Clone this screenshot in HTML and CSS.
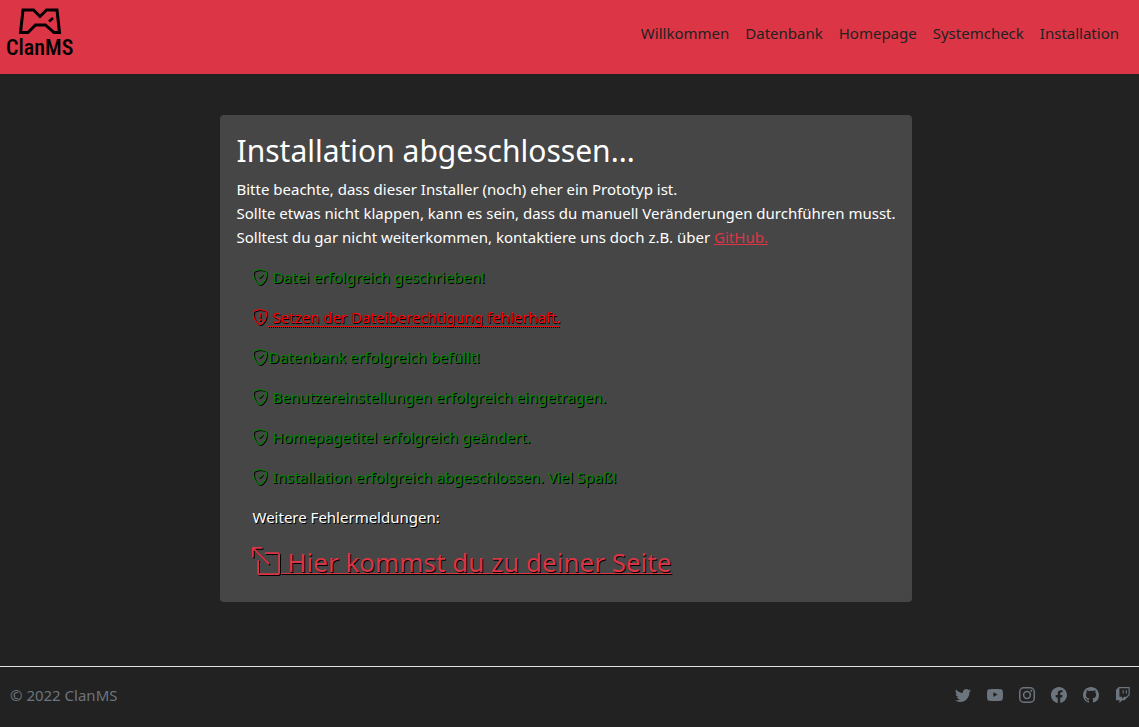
FILE: index.html
```html
<!DOCTYPE html>
<html lang="de">
<head>
<meta charset="utf-8">
<meta name="viewport" content="width=device-width, initial-scale=1">
<title>ClanMS – Installation</title>
<link rel="stylesheet" href="styles.css">
</head>
<body>
<svg class="sprite" aria-hidden="true">
  <symbol id="shield" viewBox="0 0 16 16"><path d="M5.338 1.59a61.44 61.44 0 0 0-2.837.856.481.481 0 0 0-.328.39c-.554 4.157.726 7.19 2.253 9.188a10.725 10.725 0 0 0 2.287 2.233c.346.244.652.42.893.533.12.057.218.095.293.118a.55.55 0 0 0 .101.025.615.615 0 0 0 .1-.025c.076-.023.174-.061.294-.118.24-.113.547-.29.893-.533a10.726 10.726 0 0 0 2.287-2.233c1.527-1.997 2.807-5.031 2.253-9.188a.48.48 0 0 0-.328-.39c-.651-.213-1.75-.56-2.837-.855C9.552 1.29 8.531 1.067 8 1.067c-.53 0-1.552.223-2.662.524zM5.072.56C6.157.265 7.31 0 8 0s1.843.265 2.928.56c1.11.3 2.229.655 2.887.87a1.54 1.54 0 0 1 1.044 1.262c.596 4.477-.787 7.795-2.465 9.99a11.775 11.775 0 0 1-2.517 2.453 7.159 7.159 0 0 1-1.048.625c-.28.132-.581.24-.829.24s-.548-.108-.829-.24a7.158 7.158 0 0 1-1.048-.625 11.777 11.777 0 0 1-2.517-2.453C1.928 10.487.545 7.169 1.141 2.692A1.54 1.54 0 0 1 2.185 1.43 62.456 62.456 0 0 1 5.072.56z"/></symbol>
  <symbol id="check" viewBox="0 0 16 16"><use href="#shield"/><path d="M10.854 5.146a.5.5 0 0 1 0 .708l-3 3a.5.5 0 0 1-.708 0l-1.5-1.5a.5.5 0 1 1 .708-.708L7.5 7.793l2.646-2.647a.5.5 0 0 1 .708 0z"/></symbol>
  <symbol id="alert" viewBox="0 0 16 16"><use href="#shield"/><path d="M7.001 11a1 1 0 1 1 2 0 1 1 0 0 1-2 0zM7.1 4.995a.905.905 0 1 1 1.8 0l-.35 3.507a.553.553 0 0 1-1.1 0z"/></symbol>
</svg>

<header class="header">
  <a class="brand" href="#" aria-label="ClanMS">
    <svg class="brand-mark" viewBox="0 0 44 28" aria-hidden="true"><path d="M5 3h10.500l6.500 6.500L28.500 3H39l2.500 22.500H36L27.500 18h-10L10 25.500H2.500z" fill="none" stroke="#000" stroke-width="3"/><path d="M31 14.500l4-3.500" stroke="#000" stroke-width="2.600"/></svg>
    <span class="brand-name">ClanMS</span>
  </a>
  <nav class="nav">
    <a href="#">Willkommen</a>
    <a href="#">Datenbank</a>
    <a href="#">Homepage</a>
    <a href="#">Systemcheck</a>
    <a href="#">Installation</a>
  </nav>
</header>

<main class="main">
  <section class="card">
    <h2 class="title">Installation abgeschlossen...</h2>
    <p class="intro">Bitte beachte, dass dieser Installer (noch) eher ein Prototyp ist.<br>Sollte etwas nicht klappen, kann es sein, dass du manuell Veränderungen durchführen musst.<br>Solltest du gar nicht weiterkommen, kontaktiere uns doch z.B. über <a class="link" href="#">GitHub.</a></p>
    <div class="log">
      <p class="ok"><svg class="icon"><use href="#check"/></svg> Datei erfolgreich geschrieben!</p>
      <p class="error"><svg class="icon"><use href="#alert"/></svg><span class="hint"> Setzen der Dateiberechtigung fehlerhaft.</span></p>
      <p class="ok"><svg class="icon"><use href="#check"/></svg>Datenbank erfolgreich befüllt!</p>
      <p class="ok"><svg class="icon"><use href="#check"/></svg> Benutzereinstellungen erfolgreich eingetragen.</p>
      <p class="ok"><svg class="icon"><use href="#check"/></svg> Homepagetitel erfolgreich geändert.</p>
      <p class="ok"><svg class="icon"><use href="#check"/></svg> Installation erfolgreich abgeschlossen. Viel Spaß!</p>
      <p>Weitere Fehlermeldungen:</p>
      <h3 class="next"><a class="link" href="#"><svg class="icon icon-large" viewBox="0 0 16 16"><path d="M7.364 3.5a.5.5 0 0 1 .5-.5H14.5A1.5 1.5 0 0 1 16 4.500v10a1.5 1.5 0 0 1-1.5 1.5h-10A1.5 1.5 0 0 1 3 14.500V7.864a.5.5 0 1 1 1 0V14.500a.5.5 0 0 0 .5.5h10a.5.5 0 0 0 .5-.5v-10a.5.5 0 0 0-.5-.5H7.864a.5.5 0 0 1-.5-.5z"/><path d="M0 .5A.5.5 0 0 1 .5 0h5a.5.5 0 0 1 0 1H1.707l8.147 8.146a.5.5 0 0 1-.708.708L1 1.707V5.500a.5.5 0 0 1-1 0v-5z"/></svg> Hier kommst du zu deiner Seite</a></h3>
    </div>
  </section>
</main>

<footer class="footer">
  <span>© 2022 ClanMS</span>
  <nav class="social">
    <a href="#" aria-label="Twitter"><svg viewBox="0 0 16 16"><path d="M5.026 15c6.038 0 9.341-5.003 9.341-9.334 0-.14 0-.282-.006-.422A6.685 6.685 0 0 0 16 3.542a6.658 6.658 0 0 1-1.889.518 3.301 3.301 0 0 0 1.447-1.817 6.533 6.533 0 0 1-2.087.793A3.286 3.286 0 0 0 7.875 6.030a9.325 9.325 0 0 1-6.767-3.429 3.289 3.289 0 0 0 1.018 4.382A3.323 3.323 0 0 1 .64 6.575v.045a3.288 3.288 0 0 0 2.632 3.218 3.203 3.203 0 0 1-.865.115 3.230 3.230 0 0 1-.614-.057 3.283 3.283 0 0 0 3.067 2.277A6.588 6.588 0 0 1 .78 13.580a6.320 6.320 0 0 1-.78-.045A9.344 9.344 0 0 0 5.026 15z"/></svg></a>
    <a href="#" aria-label="YouTube"><svg viewBox="0 0 16 16"><path fill-rule="evenodd" d="M8 2c2.500 0 4.700.1 6 .3 1 .2 1.600.8 1.700 1.700.4 2.600.4 5.400 0 8-.1.900-.7 1.500-1.700 1.700-3.900.400-8.100.400-12 0C1 13.500.400 12.900.3 12c-.4-2.600-.4-5.400 0-8 .1-.9.700-1.500 1.700-1.700C3.300 2.100 5.500 2 8 2zM6.400 5.209v4.818l4.157-2.408z"/></svg></a>
    <a href="#" aria-label="Instagram"><svg viewBox="0 0 16 16"><rect x=".75" y=".75" width="14.500" height="14.500" rx="4" fill="none" stroke="currentColor" stroke-width="1.500"/><circle cx="8" cy="8" r="3.400" fill="none" stroke="currentColor" stroke-width="1.500"/><circle cx="12.300" cy="3.700" r="1"/></svg></a>
    <a href="#" aria-label="Facebook"><svg viewBox="0 0 16 16"><path d="M16 8.049c0-4.446-3.582-8.050-8-8.050C3.580 0-.002 3.603-.002 8.050c0 4.017 2.926 7.347 6.750 7.951v-5.625h-2.030V8.050H6.750V6.275c0-2.017 1.195-3.131 3.022-3.131.876 0 1.791.157 1.791.157v1.980h-1.009c-.993 0-1.303.621-1.303 1.258v1.510h2.218l-.354 2.326H9.250V16c3.824-.604 6.750-3.934 6.750-7.951z"/></svg></a>
    <a href="#" aria-label="GitHub"><svg viewBox="0 0 16 16"><path d="M8 0C3.580 0 0 3.580 0 8c0 3.540 2.290 6.530 5.470 7.590.4.070.55-.17.55-.38 0-.19-.01-.82-.01-1.490-2.010.37-2.530-.49-2.690-.94-.09-.23-.48-.94-.82-1.130-.28-.15-.68-.52-.01-.53.63-.01 1.080.58 1.230.82.72 1.210 1.870.87 2.330.66.07-.52.28-.87.51-1.070-1.780-.2-3.640-.89-3.640-3.950 0-.87.31-1.590.82-2.150-.08-.2-.36-1.020.08-2.120 0 0 .67-.21 2.200.82.64-.18 1.320-.27 2-.27.68 0 1.360.09 2 .27 1.530-1.040 2.200-.82 2.200-.82.44 1.100.16 1.920.08 2.120.51.56.82 1.270.82 2.150 0 3.070-1.870 3.750-3.650 3.950.29.25.54.73.54 1.480 0 1.070-.01 1.930-.01 2.200 0 .21.15.46.55.38A8.012 8.012 0 0 0 16 8c0-4.420-3.580-8-8-8z"/></svg></a>
    <a href="#" aria-label="Twitch"><svg viewBox="0 0 16 16"><path d="M3.857 0 1 2.857v10.286h3.429V16l2.857-2.857H9.570L14.714 8V0H3.857zm9.714 7.429-2.285 2.285H9l-2 2v-2H4.429V1.143h9.142v6.286z"/><path d="M11.857 3.143h-1.143V6.570h1.143V3.143zm-3.143 0H7.571V6.570h1.143V3.143z"/></svg></a>
  </nav>
</footer>
</body>
</html>
```
FILE: styles.css
```css
* { box-sizing: border-box; }

body {
  margin: 0;
  min-height: 100vh;
  display: flex;
  flex-direction: column;
  background: #222;
  color: #fff;
  font: 15px/24px "Noto Sans", sans-serif;
}

h2, h3, p { margin: 0; font-weight: 400; }

.sprite { display: none; }

.header {
  display: flex;
  justify-content: space-between;
  align-items: flex-start;
  padding: 7px 20px 7px 6px;
  min-height: 74px;
  background: #dc3545;
}

.brand {
  display: flex;
  flex-direction: column;
  align-items: center;
  color: #000;
  text-decoration: none;
}

.brand-mark { width: 44px; height: 28px; }

.brand-name { font: 500 22px/26px "Roboto Condensed", Roboto, sans-serif; }

.nav { display: flex; gap: 16px; padding-top: 14px; }

.nav a { color: #222; text-decoration: none; }

.main {
  flex: 1;
  display: flex;
  justify-content: center;
  align-items: flex-start;
  padding: 41px 7px 40px 0;
}

.card { padding: 16px; border-radius: 4px; background: #464646; }

.title { font-size: 30px; line-height: 40px; margin-bottom: 6px; }

.link {
  color: #dc3545;
  text-decoration: underline;
  text-decoration-thickness: 1px;
}

.log {
  display: flex;
  flex-direction: column;
  gap: 16px;
  padding: 16px 16px 7px;
  text-shadow: 1px 1px 0 #000;
}

.icon {
  width: 16px;
  height: 16px;
  vertical-align: -2px;
  fill: currentColor;
  filter: drop-shadow(1px 1px 0 #000);
}

.icon-large { width: 28px; height: 28px; vertical-align: -3px; }

.ok { color: green; }

.error { color: red; }

.hint {
  white-space: pre-wrap;
  text-decoration: underline dotted 1px;
  text-underline-offset: 3px;
  text-decoration-skip-ink: none;
}

.next { font-size: 26px; line-height: 34px; }

.footer {
  display: flex;
  justify-content: space-between;
  align-items: center;
  padding: 16px 8px 20px 10px;
  border-top: 1px solid #dee2e6;
  color: #6c757d;
}

.social { display: flex; gap: 16px; }

.social a { display: flex; color: inherit; }

.social svg { width: 16px; height: 16px; fill: currentColor; }
```
